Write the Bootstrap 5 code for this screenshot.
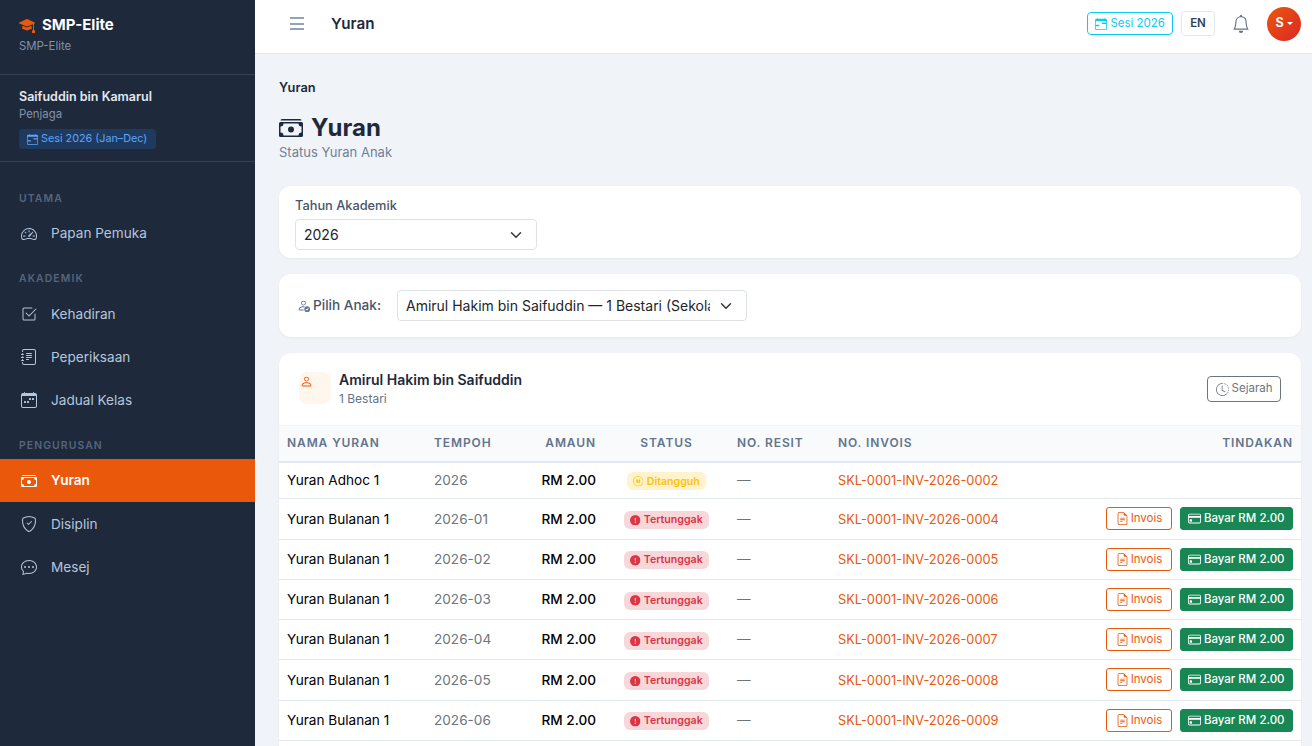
<!DOCTYPE html>
<html lang="ms">
<head>
<meta charset="utf-8">
<title>Yuran</title>
<link href="https://cdn.jsdelivr.net/npm/bootstrap@5.3.0/dist/css/bootstrap.min.css" rel="stylesheet">
<style>
html,body{height:100%;overflow:hidden}
body{font-family:Inter,"Liberation Sans",sans-serif;background:#f0f4f9;color:#1e293b;font-size:14px}
.ico{width:1em;height:1em;fill:currentColor;flex:none;display:inline-block}
.app-shell{height:746px}
.side{width:255px;flex:none;background:#1e293b;color:#cbd5e1}
.brand-box{height:75px;padding:14px 19px 0;border-bottom:1px solid #334155}
.brand-name{font-size:15px;font-weight:700;color:#fff;line-height:21px;gap:7px}
.brand-name .ico{font-size:16px;color:#ea580c}
.brand-sub{font-size:11.4px;color:#8492a6;margin-top:3px;line-height:17px}
.user-box{height:87px;padding:13px 19px 0;border-bottom:1px solid #334155}
.user-name{font-size:12.5px;font-weight:600;color:#e2e8f0;line-height:18px}
.user-role{font-size:11.4px;color:#8492a6;line-height:17px}
.sess-pill{display:inline-flex;align-items:center;gap:3px;margin-top:6px;height:20px;padding:0 9px 0 8px;background:#1e3a5f;color:#60a5fa;border-radius:4px;font-size:10.8px}
.sess-pill .ico{font-size:11px}
.side-nav{padding-top:13px}
.sec-label{font-size:10.4px;font-weight:600;letter-spacing:1.1px;color:#56657b;text-transform:uppercase;line-height:16px;padding:16px 19px 5px}
.sec-last{padding-bottom:5.2px}
.side-link{display:flex;align-items:center;gap:14px;height:43.2px;padding:0 19px 0 21px;color:#b4c6dd;font-size:13.6px;text-decoration:none}
.side-link .ico{font-size:16px}
.side-link.on{background:#ea580c;color:#fff;font-weight:600}
.topbar{height:54px;flex:none;background:#fff;border-bottom:1px solid #e2e8f0;padding:0 11px 6px 35px}
.burger{width:14px;height:13px;display:flex;flex-direction:column;justify-content:space-between}
.burger i{display:block;height:2px;background:#94a3b8}
.top-title{font-size:15.2px;font-weight:600;margin-left:27px;color:#1e293b;position:relative;top:1px}
.btn-sess{height:23px;padding:0 7px 0 7.5px;display:flex;align-items:center;gap:3px;font-size:11.5px;border-radius:4px;color:#0dcaf0;border:1px solid #0dcaf0;background:transparent}
.btn-sess .ico{font-size:12px}
.btn-lang{height:25px;width:34px;padding:0;font-size:11.5px;font-weight:600;border:1px solid #e2e8f0;color:#334155;border-radius:4px;margin-left:8px;background:#fff}
.bell{font-size:18px;color:#64748b;margin-left:17px;display:flex}
.avatar{width:34px;height:34px;border-radius:50%;margin-left:17px;background:linear-gradient(135deg,#ea580c,#dc2626);color:#fff;font-size:12.5px;font-weight:700;display:flex;align-items:center;justify-content:center;gap:3px}
.avatar::after{content:"";border-left:3px solid transparent;border-right:3px solid transparent;border-top:3px solid #fff}
.content-pane{padding:24px 11px 0 24px;overflow:hidden}
.crumb{font-size:12.8px;font-weight:600;line-height:19px;color:#1e293b}
.page-head{font-size:24px;font-weight:700;line-height:32px;margin:15px 0 0;display:flex;align-items:center;gap:8px;color:#1e293b}
.page-sub{font-size:13px;color:#718096;line-height:17px;margin:0 0 25px}
.panel{border:0;border-radius:12px;background:#fff;box-shadow:0 1px 3px rgba(15,23,42,.05);margin-bottom:16px}
.year-panel{height:72px;padding:11px 16px 0}
.fld-label{font-size:12.8px;font-weight:500;color:#475569;line-height:18px;margin:0 0 4px}
.pick{font-family:Inter,"Liberation Sans",sans-serif;font-size:14px;height:31px;padding:0 36px 0 8px;border-color:#dee2e6;border-radius:4px;color:#212529;background-position:right 12px center}
.year-pick{width:242px}
.child-panel{height:63px;padding:0 16px 0 18px;display:flex;align-items:center}
.child-label{font-size:13.6px;font-weight:500;color:#475569;display:flex;align-items:center;gap:3px;width:100px;flex:none}
.child-label .ico{font-size:13px;color:#64748b}
.child-pick{width:350px}
.kid-head{height:72px;padding:19px 20px 0}
.kid-ico{width:32px;height:32px;border-radius:8px;background:#fff7ed;color:#ea580c;font-size:13px;padding:3px 0 0 1px;flex:none;display:flex;align-items:flex-start;margin-right:8px}
.kid-name{font-size:14px;font-weight:600;line-height:15px}
.kid-cls{font-size:12px;color:#64748b;line-height:16px;margin-top:4px}
.btn-hist{height:26px;padding:0 7.5px;font-size:11.5px;display:flex;align-items:center;gap:3px;border-radius:4px;color:#6c757d;border:1px solid #6c757d;background:transparent;margin-top:4px}
.btn-hist .ico{font-size:13px}
.fee-table{table-layout:fixed;width:100%;margin:0;border-collapse:collapse}
.fee-table th{background:#f8fafc;font-size:12px;font-weight:600;letter-spacing:.9px;text-transform:uppercase;color:#64748b;height:36px;padding:0 8px;vertical-align:middle;border-top:1px solid #f1f5f9;border-bottom:2px solid #e2e8f0;white-space:nowrap}
.fee-table td{font-size:13.6px;padding:0 8px;height:40.25px;vertical-align:middle;border-bottom:1px solid #e2e8f0;color:#000;white-space:nowrap}
.fee-table tr.first td{height:37.3px}
.fee-table td.per,.fee-table td.dash{color:#6c757d}
.fee-table td.amt{font-weight:500}
.inv-link{color:#ea580c;text-decoration:none;font-size:12.8px}
.tag{display:inline-flex;align-items:center;gap:3px;height:18px;padding:0 6px;border-radius:6px;font-size:10.6px;font-weight:600;vertical-align:middle}
.tag .ico{font-size:10.5px}
.tag-wait{background:#fff3cd;color:#ffc107}
.tag-due{background:#f8d7da;color:#dc3545}
.acts{display:flex;justify-content:flex-end;gap:8px}
.btn-inv,.btn-pay{height:23px;font-size:11.5px;border-radius:3px;display:flex;align-items:center;white-space:nowrap}
.btn-inv{color:#ea580c;border:1px solid #ea580c;background:transparent;padding:0 9px 0 8.5px;gap:2px}
.btn-pay{color:#fff;border:1px solid #198754;background:#198754;font-weight:500;padding:0 7.5px 0 7px;gap:2.5px}
.btn-inv .ico,.btn-pay .ico{font-size:13px}
.c1{width:147px}.c2{width:94px}.c3{width:84px}.c4{width:125px}.c5{width:101px}.c6{width:255px}
</style>
</head>
<body>
<svg width="0" height="0" class="position-absolute" aria-hidden="true">
<symbol id="i-grad" viewBox="0 0 16 16"><path d="M8.211 2.047a.5.5 0 0 0-.422 0l-7.5 3.5a.5.5 0 0 0 .025.917l7.5 3a.5.5 0 0 0 .372 0L14 7.14V13a1 1 0 0 0-1 1v2h3v-2a1 1 0 0 0-1-1V6.739l.686-.275a.5.5 0 0 0 .025-.917l-7.5-3.5Z"/><path d="M4.176 9.032a.5.5 0 0 0-.656.327l-.5 1.7a.5.5 0 0 0 .294.605l4.5 1.8a.5.5 0 0 0 .372 0l4.5-1.8a.5.5 0 0 0 .294-.605l-.5-1.7a.5.5 0 0 0-.656-.327L8 10.466 4.176 9.032Z"/></symbol>
<symbol id="i-calr" viewBox="0 0 16 16"><path d="M9 7a1 1 0 0 1 1-1h5v2h-5a1 1 0 0 1-1-1zM1 9h4a1 1 0 0 1 0 2H1V9z"/><path d="M3.5 0a.5.5 0 0 1 .5.5V1h8V.5a.5.5 0 0 1 1 0V1h1a2 2 0 0 1 2 2v11a2 2 0 0 1-2 2H2a2 2 0 0 1-2-2V3a2 2 0 0 1 2-2h1V.5a.5.5 0 0 1 .5-.5zM1 4v10a1 1 0 0 0 1 1h12a1 1 0 0 0 1-1V4H1z"/></symbol>
<symbol id="i-speed" viewBox="0 0 16 16"><path d="M8 4a.5.5 0 0 1 .5.5V6a.5.5 0 0 1-1 0V4.5A.5.5 0 0 1 8 4zM3.732 5.732a.5.5 0 0 1 .707 0l.915.914a.5.5 0 1 1-.708.708l-.914-.915a.5.5 0 0 1 0-.707zM2 10a.5.5 0 0 1 .5-.5h1.586a.5.5 0 0 1 0 1H2.5A.5.5 0 0 1 2 10zm9.5 0a.5.5 0 0 1 .5-.5h1.5a.5.5 0 0 1 0 1H12a.5.5 0 0 1-.5-.5zm.754-4.246a.389.389 0 0 0-.527-.02L7.547 9.31a.91.91 0 1 0 1.302 1.258l3.434-4.297a.389.389 0 0 0-.029-.518z"/><path d="M0 10a8 8 0 1 1 15.547 2.661c-.442 1.253-1.845 1.602-2.932 1.25C11.309 13.488 9.475 13 8 13c-1.474 0-3.31.488-4.615.911-1.087.352-2.49.003-2.932-1.25A7.988 7.988 0 0 1 0 10zm8-7a7 7 0 0 0-6.603 9.329c.203.575.923.876 1.68.63C4.397 12.533 6.358 12 8 12s3.604.532 4.923.96c.757.245 1.477-.056 1.68-.631A7 7 0 0 0 8 3z"/></symbol>
<symbol id="i-check" viewBox="0 0 16 16"><path d="M3 14.5A1.5 1.5 0 0 1 1.5 13V3A1.5 1.5 0 0 1 3 1.5h8a.5.5 0 0 1 0 1H3a.5.5 0 0 0-.5.5v10a.5.5 0 0 0 .5.5h10a.5.5 0 0 0 .5-.5V8a.5.5 0 0 1 1 0v5a1.5 1.5 0 0 1-1.5 1.5H3z"/><path d="M8.354 10.354l7-7a.5.5 0 0 0-.708-.708L8 9.293 5.354 6.646a.5.5 0 1 0-.708.708l3 3a.5.5 0 0 0 .708 0z"/></symbol>
<symbol id="i-journal" viewBox="0 0 16 16"><path d="M5 10.5a.5.5 0 0 1 .5-.5h2a.5.5 0 0 1 0 1h-2a.5.5 0 0 1-.5-.5zm0-2a.5.5 0 0 1 .5-.5h5a.5.5 0 0 1 0 1h-5a.5.5 0 0 1-.5-.5zm0-2a.5.5 0 0 1 .5-.5h5a.5.5 0 0 1 0 1h-5a.5.5 0 0 1-.5-.5zm0-2a.5.5 0 0 1 .5-.5h5a.5.5 0 0 1 0 1h-5a.5.5 0 0 1-.5-.5z"/><path d="M3 0h10a2 2 0 0 1 2 2v12a2 2 0 0 1-2 2H3a2 2 0 0 1-2-2v-1h1v1a1 1 0 0 0 1 1h10a1 1 0 0 0 1-1V2a1 1 0 0 0-1-1H3a1 1 0 0 0-1 1v1H1V2a2 2 0 0 1 2-2z"/><path d="M1 5v-.5a.5.5 0 0 1 1 0V5h.5a.5.5 0 0 1 0 1h-2a.5.5 0 0 1 0-1H1zm0 3v-.5a.5.5 0 0 1 1 0V8h.5a.5.5 0 0 1 0 1h-2a.5.5 0 0 1 0-1H1zm0 3v-.5a.5.5 0 0 1 1 0v.5h.5a.5.5 0 0 1 0 1h-2a.5.5 0 0 1 0-1H1z"/></symbol>
<symbol id="i-calw" viewBox="0 0 16 16"><path d="M11 6.5a.5.5 0 0 1 .5-.5h1a.5.5 0 0 1 .5.5v1a.5.5 0 0 1-.5.5h-1a.5.5 0 0 1-.5-.5v-1zm-3 0a.5.5 0 0 1 .5-.5h1a.5.5 0 0 1 .5.5v1a.5.5 0 0 1-.5.5h-1a.5.5 0 0 1-.5-.5v-1zm-5 3a.5.5 0 0 1 .5-.5h1a.5.5 0 0 1 .5.5v1a.5.5 0 0 1-.5.5h-1a.5.5 0 0 1-.5-.5v-1zm3 0a.5.5 0 0 1 .5-.5h1a.5.5 0 0 1 .5.5v1a.5.5 0 0 1-.5.5h-1a.5.5 0 0 1-.5-.5v-1z"/><path d="M3.5 0a.5.5 0 0 1 .5.5V1h8V.5a.5.5 0 0 1 1 0V1h1a2 2 0 0 1 2 2v11a2 2 0 0 1-2 2H2a2 2 0 0 1-2-2V3a2 2 0 0 1 2-2h1V.5a.5.5 0 0 1 .5-.5zM1 4v10a1 1 0 0 0 1 1h12a1 1 0 0 0 1-1V4H1z"/></symbol>
<symbol id="i-cash" viewBox="0 0 16 16"><path d="M1 3a1 1 0 0 1 1-1h12a1 1 0 0 1 1 1H1zm7 8a2 2 0 1 0 0-4 2 2 0 0 0 0 4z"/><path d="M0 5a1 1 0 0 1 1-1h14a1 1 0 0 1 1 1v8a1 1 0 0 1-1 1H1a1 1 0 0 1-1-1V5zm3 0a2 2 0 0 1-2 2v4a2 2 0 0 1 2 2h10a2 2 0 0 1 2-2V7a2 2 0 0 1-2-2H3z"/></symbol>
<symbol id="i-shield" viewBox="0 0 16 16"><path d="M5.338 1.59a61.44 61.44 0 0 0-2.837.856.481.481 0 0 0-.328.39c-.554 4.157.726 7.19 2.253 9.188a10.725 10.725 0 0 0 2.287 2.233c.346.244.652.42.893.533.12.057.218.095.293.118a.55.55 0 0 0 .101.025.615.615 0 0 0 .1-.025c.076-.023.174-.061.294-.118.24-.113.547-.29.893-.533a10.726 10.726 0 0 0 2.287-2.233c1.527-1.997 2.807-5.031 2.253-9.188a.48.48 0 0 0-.328-.39c-.651-.213-1.75-.56-2.837-.855C9.552 1.29 8.531 1.067 8 1.067c-.53 0-1.552.223-2.662.524zM5.072.56C6.157.265 7.31 0 8 0s1.843.265 2.928.56c1.11.3 2.229.655 2.887.87a1.54 1.54 0 0 1 1.044 1.262c.596 4.477-.787 7.795-2.465 9.99a11.775 11.775 0 0 1-2.517 2.453 7.159 7.159 0 0 1-1.048.625c-.28.132-.581.24-.829.24s-.548-.108-.829-.24a7.158 7.158 0 0 1-1.048-.625 11.777 11.777 0 0 1-2.517-2.453C1.928 10.487.545 7.169 1.141 2.692A1.54 1.54 0 0 1 2.185 1.43 62.456 62.456 0 0 1 5.072.56z"/><path d="M10.854 5.146a.5.5 0 0 1 0 .708l-3 3a.5.5 0 0 1-.708 0l-1.5-1.5a.5.5 0 1 1 .708-.708L7.5 7.793l2.646-2.647a.5.5 0 0 1 .708 0z"/></symbol>
<symbol id="i-chat" viewBox="0 0 16 16"><path d="M5 8a1 1 0 1 1-2 0 1 1 0 0 1 2 0zm4 0a1 1 0 1 1-2 0 1 1 0 0 1 2 0zm3 1a1 1 0 1 0 0-2 1 1 0 0 0 0 2z"/><path d="m2.165 15.803.02-.004c1.83-.363 2.948-.842 3.468-1.105A9.06 9.06 0 0 0 8 15c4.418 0 8-3.134 8-7s-3.582-7-8-7-8 3.134-8 7c0 1.76.743 3.37 1.97 4.6a10.437 10.437 0 0 1-.524 2.318l-.003.011a10.722 10.722 0 0 1-.244.637c-.079.186.074.394.273.362a21.673 21.673 0 0 0 .693-.125zm.8-3.108a1 1 0 0 0-.287-.801C1.618 10.83 1 9.468 1 8c0-3.192 3.004-6 7-6s7 2.808 7 6c0 3.193-3.004 6-7 6a8.06 8.06 0 0 1-2.088-.272 1 1 0 0 0-.711.074c-.387.196-1.24.57-2.634.893a10.97 10.97 0 0 0 .398-2z"/></symbol>
<symbol id="i-bell" viewBox="0 0 16 16"><path d="M8 16a2 2 0 0 0 2-2H6a2 2 0 0 0 2 2zM8 1.918l-.797.161A4.002 4.002 0 0 0 4 6c0 .628-.134 2.197-.459 3.742-.16.767-.376 1.566-.663 2.258h10.244c-.287-.692-.502-1.49-.663-2.258C12.134 8.197 12 6.628 12 6a4.002 4.002 0 0 0-3.203-3.92L8 1.917zM14.22 12c.223.447.481.801.78 1H1c.299-.199.557-.553.78-1C2.68 10.2 3 6.88 3 6c0-2.42 1.72-4.44 4.005-4.901a1 1 0 1 1 1.99 0A5.002 5.002 0 0 1 13 6c0 .88.32 4.2 1.22 6z"/></symbol>
<symbol id="i-pcheck" viewBox="0 0 16 16"><path d="M12.5 16a3.5 3.5 0 1 0 0-7 3.5 3.5 0 0 0 0 7Zm1.679-4.493-1.335 2.226a.75.75 0 0 1-1.174.144l-.774-.773a.5.5 0 0 1 .708-.708l.547.548 1.17-1.951a.5.5 0 1 1 .858.514ZM11 5a3 3 0 1 1-6 0 3 3 0 0 1 6 0ZM8 7a2 2 0 1 0 0-4 2 2 0 0 0 0 4Z"/><path d="M8.256 14a4.474 4.474 0 0 1-.229-1.004H3c.001-.246.154-.986.832-1.664C4.484 10.68 5.711 10 8 10c.26 0 .507.009.74.025.226-.341.496-.65.804-.918C9.077 9.038 8.564 9 8 9c-5 0-6 3-6 4s1 1 1 1h5.256Z"/></symbol>
<symbol id="i-person" viewBox="0 0 16 16"><path d="M8 8a3 3 0 1 0 0-6 3 3 0 0 0 0 6Zm2-3a2 2 0 1 1-4 0 2 2 0 0 1 4 0Zm4 8c0 1-1 1-1 1H3s-1 0-1-1 1-4 6-4 6 3 6 4Zm-1-.004c-.001-.246-.154-.986-.832-1.664C11.516 10.68 10.289 10 8 10c-2.29 0-3.516.68-4.168 1.332-.678.678-.83 1.418-.832 1.664h10Z"/></symbol>
<symbol id="i-hist" viewBox="0 0 16 16"><path d="M8.515 1.019A7 7 0 0 0 8 1V0a8 8 0 0 1 .589.022l-.074.997zm2.004.45a7.003 7.003 0 0 0-.985-.299l.219-.976c.383.086.76.2 1.126.342l-.36.933zm1.37.71a7.01 7.01 0 0 0-.439-.27l.493-.87a8.025 8.025 0 0 1 .979.654l-.615.789a6.996 6.996 0 0 0-.418-.302zm1.834 1.79a6.99 6.99 0 0 0-.653-.796l.724-.69c.27.285.52.59.747.91l-.818.576zm.744 1.352a7.08 7.08 0 0 0-.214-.468l.893-.45a7.976 7.976 0 0 1 .45 1.088l-.95.313a7.023 7.023 0 0 0-.179-.483zm.53 2.507a6.991 6.991 0 0 0-.1-1.025l.985-.17c.067.386.106.778.116 1.17l-1 .025zm-.131 1.538c.033-.17.06-.339.081-.51l.993.123a7.957 7.957 0 0 1-.23 1.155l-.964-.267c.046-.165.086-.332.12-.501zm-.952 2.379c.184-.29.346-.594.486-.908l.914.405c-.16.36-.345.706-.555 1.038l-.845-.535zm-.964 1.205c.122-.122.239-.248.35-.378l.758.653a8.073 8.073 0 0 1-.401.432l-.707-.707z"/><path d="M8 1a7 7 0 1 0 4.95 11.95l.707.707A8.001 8.001 0 1 1 8 0v1z"/><path d="M7.5 3a.5.5 0 0 1 .5.5v5.21l3.248 1.856a.5.5 0 0 1-.496.868l-3.5-2A.5.5 0 0 1 7 9V3.5a.5.5 0 0 1 .5-.5z"/></symbol>
<symbol id="i-file" viewBox="0 0 16 16"><path d="M5.5 7a.5.5 0 0 0 0 1h5a.5.5 0 0 0 0-1h-5zM5 9.5a.5.5 0 0 1 .5-.5h5a.5.5 0 0 1 0 1h-5a.5.5 0 0 1-.5-.5zm0 2a.5.5 0 0 1 .5-.5h2a.5.5 0 0 1 0 1h-2a.5.5 0 0 1-.5-.5z"/><path d="M9.5 0H4a2 2 0 0 0-2 2v12a2 2 0 0 0 2 2h8a2 2 0 0 0 2-2V4.5L9.5 0zm0 1v2A1.5 1.5 0 0 0 11 4.5h2V14a1 1 0 0 1-1 1H4a1 1 0 0 1-1-1V2a1 1 0 0 1 1-1h5.5z"/></symbol>
<symbol id="i-card" viewBox="0 0 16 16"><path d="M0 4a2 2 0 0 1 2-2h12a2 2 0 0 1 2 2v8a2 2 0 0 1-2 2H2a2 2 0 0 1-2-2V4zm2-1a1 1 0 0 0-1 1v1h14V4a1 1 0 0 0-1-1H2zm13 4H1v5a1 1 0 0 0 1 1h12a1 1 0 0 0 1-1V7z"/><path d="M2 10a1 1 0 0 1 1-1h1a1 1 0 0 1 1 1v1a1 1 0 0 1-1 1H3a1 1 0 0 1-1-1v-1z"/></symbol>
<symbol id="i-warn" viewBox="0 0 16 16"><path d="M16 8A8 8 0 1 1 0 8a8 8 0 0 1 16 0zM8 4a.905.905 0 0 0-.9.995l.35 3.507a.552.552 0 0 0 1.1 0l.35-3.507A.905.905 0 0 0 8 4zm.002 6a1 1 0 1 0 0 2 1 1 0 0 0 0-2z"/></symbol>
<symbol id="i-pause" viewBox="0 0 16 16"><path d="M8 15A7 7 0 1 1 8 1a7 7 0 0 1 0 14zm0 1A8 8 0 1 0 8 0a8 8 0 0 0 0 16z"/><path d="M5 6.25a1.25 1.25 0 1 1 2.5 0v3.5a1.25 1.25 0 1 1-2.5 0v-3.5zm3.5 0a1.25 1.25 0 1 1 2.5 0v3.5a1.25 1.25 0 1 1-2.5 0v-3.5z"/></symbol>
</svg>

<div class="d-flex app-shell">
  <aside class="side d-flex flex-column">
    <div class="brand-box">
      <div class="brand-name d-flex align-items-center"><svg class="ico"><use href="#i-grad"/></svg>SMP-Elite</div>
      <div class="brand-sub">SMP-Elite</div>
    </div>
    <div class="user-box">
      <div class="user-name">Saifuddin bin Kamarul</div>
      <div class="user-role">Penjaga</div>
      <div class="sess-pill"><svg class="ico"><use href="#i-calr"/></svg>Sesi 2026 (Jan–Dec)</div>
    </div>
    <nav class="side-nav">
      <div class="sec-label">Utama</div>
      <a class="side-link" href="#"><svg class="ico"><use href="#i-speed"/></svg>Papan Pemuka</a>
      <div class="sec-label">Akademik</div>
      <a class="side-link" href="#"><svg class="ico"><use href="#i-check"/></svg>Kehadiran</a>
      <a class="side-link" href="#"><svg class="ico"><use href="#i-journal"/></svg>Peperiksaan</a>
      <a class="side-link" href="#"><svg class="ico"><use href="#i-calw"/></svg>Jadual Kelas</a>
      <div class="sec-label sec-last">Pengurusan</div>
      <a class="side-link on" href="#"><svg class="ico"><use href="#i-cash"/></svg>Yuran</a>
      <a class="side-link" href="#"><svg class="ico"><use href="#i-shield"/></svg>Disiplin</a>
      <a class="side-link" href="#"><svg class="ico"><use href="#i-chat"/></svg>Mesej</a>
    </nav>
  </aside>
  <div class="flex-grow-1 d-flex flex-column overflow-hidden">
    <header class="topbar d-flex align-items-center">
      <span class="burger"><i></i><i></i><i></i></span>
      <span class="top-title">Yuran</span>
      <div class="ms-auto d-flex align-items-center">
        <button class="btn-sess" type="button"><svg class="ico"><use href="#i-calr"/></svg>Sesi 2026</button>
        <button class="btn-lang" type="button">EN</button>
        <span class="bell"><svg class="ico"><use href="#i-bell"/></svg></span>
        <span class="avatar">S</span>
      </div>
    </header>
    <main class="content-pane flex-grow-1">
      <div class="crumb">Yuran</div>
      <h1 class="page-head"><svg class="ico"><use href="#i-cash"/></svg>Yuran</h1>
      <p class="page-sub">Status Yuran Anak</p>

      <div class="panel year-panel">
        <label class="fld-label d-block" for="yr">Tahun Akademik</label>
        <select id="yr" class="form-select pick year-pick"><option>2026</option></select>
      </div>

      <div class="panel child-panel">
        <label class="child-label" for="kid"><svg class="ico"><use href="#i-pcheck"/></svg>Pilih Anak:</label>
        <select id="kid" class="form-select pick child-pick"><option>Amirul Hakim bin Saifuddin — 1 Bestari (Sekolah Menengah)</option></select>
      </div>

      <div class="panel overflow-hidden">
        <div class="kid-head d-flex align-items-start">
          <div class="kid-ico"><svg class="ico"><use href="#i-person"/></svg></div>
          <div>
            <div class="kid-name">Amirul Hakim bin Saifuddin</div>
            <div class="kid-cls">1 Bestari</div>
          </div>
          <button class="btn-hist ms-auto" type="button"><svg class="ico"><use href="#i-hist"/></svg>Sejarah</button>
        </div>
        <table class="fee-table">
          <colgroup><col class="c1"><col class="c2"><col class="c3"><col class="c4"><col class="c5"><col class="c6"><col></colgroup>
          <thead><tr>
            <th>Nama Yuran</th><th>Tempoh</th><th class="text-end">Amaun</th><th class="text-center">Status</th><th>No. Resit</th><th>No. Invois</th><th class="text-end">Tindakan</th>
          </tr></thead>
          <tbody>
            <tr class="first"><td>Yuran Adhoc 1</td><td class="per">2026</td><td class="amt text-end">RM 2.00</td><td class="text-center"><span class="tag tag-wait"><svg class="ico"><use href="#i-pause"/></svg>Ditangguh</span></td><td class="dash">—</td><td><a class="inv-link" href="#">SKL-0001-INV-2026-0002</a></td><td></td></tr>
            <tr><td>Yuran Bulanan 1</td><td class="per">2026-01</td><td class="amt text-end">RM 2.00</td><td class="text-center"><span class="tag tag-due"><svg class="ico"><use href="#i-warn"/></svg>Tertunggak</span></td><td class="dash">—</td><td><a class="inv-link" href="#">SKL-0001-INV-2026-0004</a></td><td><div class="acts"><button class="btn-inv" type="button"><svg class="ico"><use href="#i-file"/></svg>Invois</button><button class="btn-pay" type="button"><svg class="ico"><use href="#i-card"/></svg>Bayar RM 2.00</button></div></td></tr>
            <tr><td>Yuran Bulanan 1</td><td class="per">2026-02</td><td class="amt text-end">RM 2.00</td><td class="text-center"><span class="tag tag-due"><svg class="ico"><use href="#i-warn"/></svg>Tertunggak</span></td><td class="dash">—</td><td><a class="inv-link" href="#">SKL-0001-INV-2026-0005</a></td><td><div class="acts"><button class="btn-inv" type="button"><svg class="ico"><use href="#i-file"/></svg>Invois</button><button class="btn-pay" type="button"><svg class="ico"><use href="#i-card"/></svg>Bayar RM 2.00</button></div></td></tr>
            <tr><td>Yuran Bulanan 1</td><td class="per">2026-03</td><td class="amt text-end">RM 2.00</td><td class="text-center"><span class="tag tag-due"><svg class="ico"><use href="#i-warn"/></svg>Tertunggak</span></td><td class="dash">—</td><td><a class="inv-link" href="#">SKL-0001-INV-2026-0006</a></td><td><div class="acts"><button class="btn-inv" type="button"><svg class="ico"><use href="#i-file"/></svg>Invois</button><button class="btn-pay" type="button"><svg class="ico"><use href="#i-card"/></svg>Bayar RM 2.00</button></div></td></tr>
            <tr><td>Yuran Bulanan 1</td><td class="per">2026-04</td><td class="amt text-end">RM 2.00</td><td class="text-center"><span class="tag tag-due"><svg class="ico"><use href="#i-warn"/></svg>Tertunggak</span></td><td class="dash">—</td><td><a class="inv-link" href="#">SKL-0001-INV-2026-0007</a></td><td><div class="acts"><button class="btn-inv" type="button"><svg class="ico"><use href="#i-file"/></svg>Invois</button><button class="btn-pay" type="button"><svg class="ico"><use href="#i-card"/></svg>Bayar RM 2.00</button></div></td></tr>
            <tr><td>Yuran Bulanan 1</td><td class="per">2026-05</td><td class="amt text-end">RM 2.00</td><td class="text-center"><span class="tag tag-due"><svg class="ico"><use href="#i-warn"/></svg>Tertunggak</span></td><td class="dash">—</td><td><a class="inv-link" href="#">SKL-0001-INV-2026-0008</a></td><td><div class="acts"><button class="btn-inv" type="button"><svg class="ico"><use href="#i-file"/></svg>Invois</button><button class="btn-pay" type="button"><svg class="ico"><use href="#i-card"/></svg>Bayar RM 2.00</button></div></td></tr>
            <tr><td>Yuran Bulanan 1</td><td class="per">2026-06</td><td class="amt text-end">RM 2.00</td><td class="text-center"><span class="tag tag-due"><svg class="ico"><use href="#i-warn"/></svg>Tertunggak</span></td><td class="dash">—</td><td><a class="inv-link" href="#">SKL-0001-INV-2026-0009</a></td><td><div class="acts"><button class="btn-inv" type="button"><svg class="ico"><use href="#i-file"/></svg>Invois</button><button class="btn-pay" type="button"><svg class="ico"><use href="#i-card"/></svg>Bayar RM 2.00</button></div></td></tr>
            <tr><td colspan="7"></td></tr>
          </tbody>
        </table>
      </div>
    </main>
  </div>
</div>
<script src="https://cdn.jsdelivr.net/npm/bootstrap@5.3.0/dist/js/bootstrap.bundle.min.js"></script>
</body>
</html>
